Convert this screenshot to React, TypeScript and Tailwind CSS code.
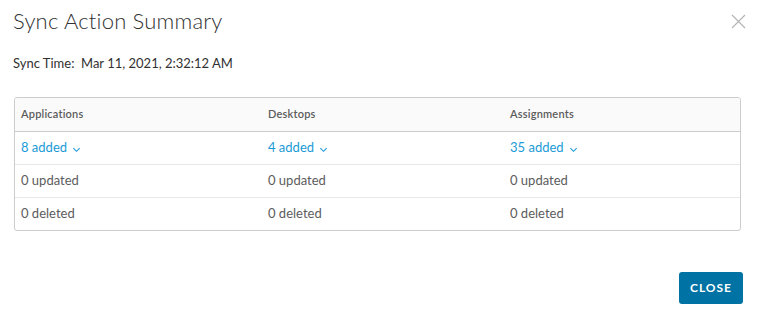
import React from "react";

const columns = [
  { title: "Applications", added: 8, width: "w-[247px]" },
  { title: "Desktops", added: 4, width: "w-[242px]" },
  { title: "Assignments", added: 35, width: "flex-1" },
];

function Chevron() {
  return (
    <svg width="9" height="9" viewBox="0 0 10 10" className="ml-[5px] mt-[2px]">
      <path d="M1.5 3.5 L5 7 L8.5 3.5" fill="none" stroke="currentColor" strokeWidth="1.2" />
    </svg>
  );
}

export default function App() {
  return (
    <div
      className="w-[759px] h-[313px] bg-white relative text-[#5c5c5c]"
      style={{ fontFamily: "Lato, 'Noto Sans', sans-serif" }}
    >
      <div className="px-[14px] pt-[8px]">
        <div className="flex justify-between items-start">
          <h1 className="text-[22px] font-light text-[#313131] tracking-[0.2px] leading-[26px] -ml-[1px]">
            Sync Action Summary
          </h1>
          <button className="mt-[6px] -mr-[1px] text-[#b3b3b3]">
            <svg width="15" height="15" viewBox="0 0 15 15">
              <path d="M1 1 L14 14 M14 1 L1 14" stroke="currentColor" strokeWidth="1.1" fill="none" />
            </svg>
          </button>
        </div>

        <p className="mt-[21px] text-[13px] text-[#313131] -ml-[1px] leading-[16px]">
          Sync Time:&nbsp; Mar 11, 2021, 2:32:12 AM
        </p>

        <div className="mt-[26px] mr-[4px] border border-[#cccccc] rounded-[3px] overflow-hidden text-[13px]">
          <div className="flex bg-[#fafafa] border-b border-[#cccccc] h-[34px] items-center">
            {columns.map((c) => (
              <div key={c.title} className={`${c.width} px-[6px] text-[11px] font-semibold tracking-[0.2px]`}>
                {c.title}
              </div>
            ))}
          </div>
          <div className="flex h-[33px] items-center border-b border-[#e8e8e8]">
            {columns.map((c) => (
              <div key={c.title} className={`${c.width} px-[6px]`}>
                <span className="inline-flex items-center text-[#1a9ad6]">
                  {c.added} added
                  <Chevron />
                </span>
              </div>
            ))}
          </div>
          <div className="flex h-[33px] items-center border-b border-[#e8e8e8]">
            {columns.map((c) => (
              <div key={c.title} className={`${c.width} px-[6px]`}>
                0 updated
              </div>
            ))}
          </div>
          <div className="flex h-[32px] items-center">
            {columns.map((c) => (
              <div key={c.title} className={`${c.width} px-[6px]`}>
                0 deleted
              </div>
            ))}
          </div>
        </div>

        <div className="flex justify-end mt-[41px] mr-[2px]">
          <button className="w-[64px] h-[32px] bg-[#0072a3] text-white text-[12px] font-bold tracking-[1px] rounded-[3px]">
            CLOSE
          </button>
        </div>
      </div>
    </div>
  );
}
